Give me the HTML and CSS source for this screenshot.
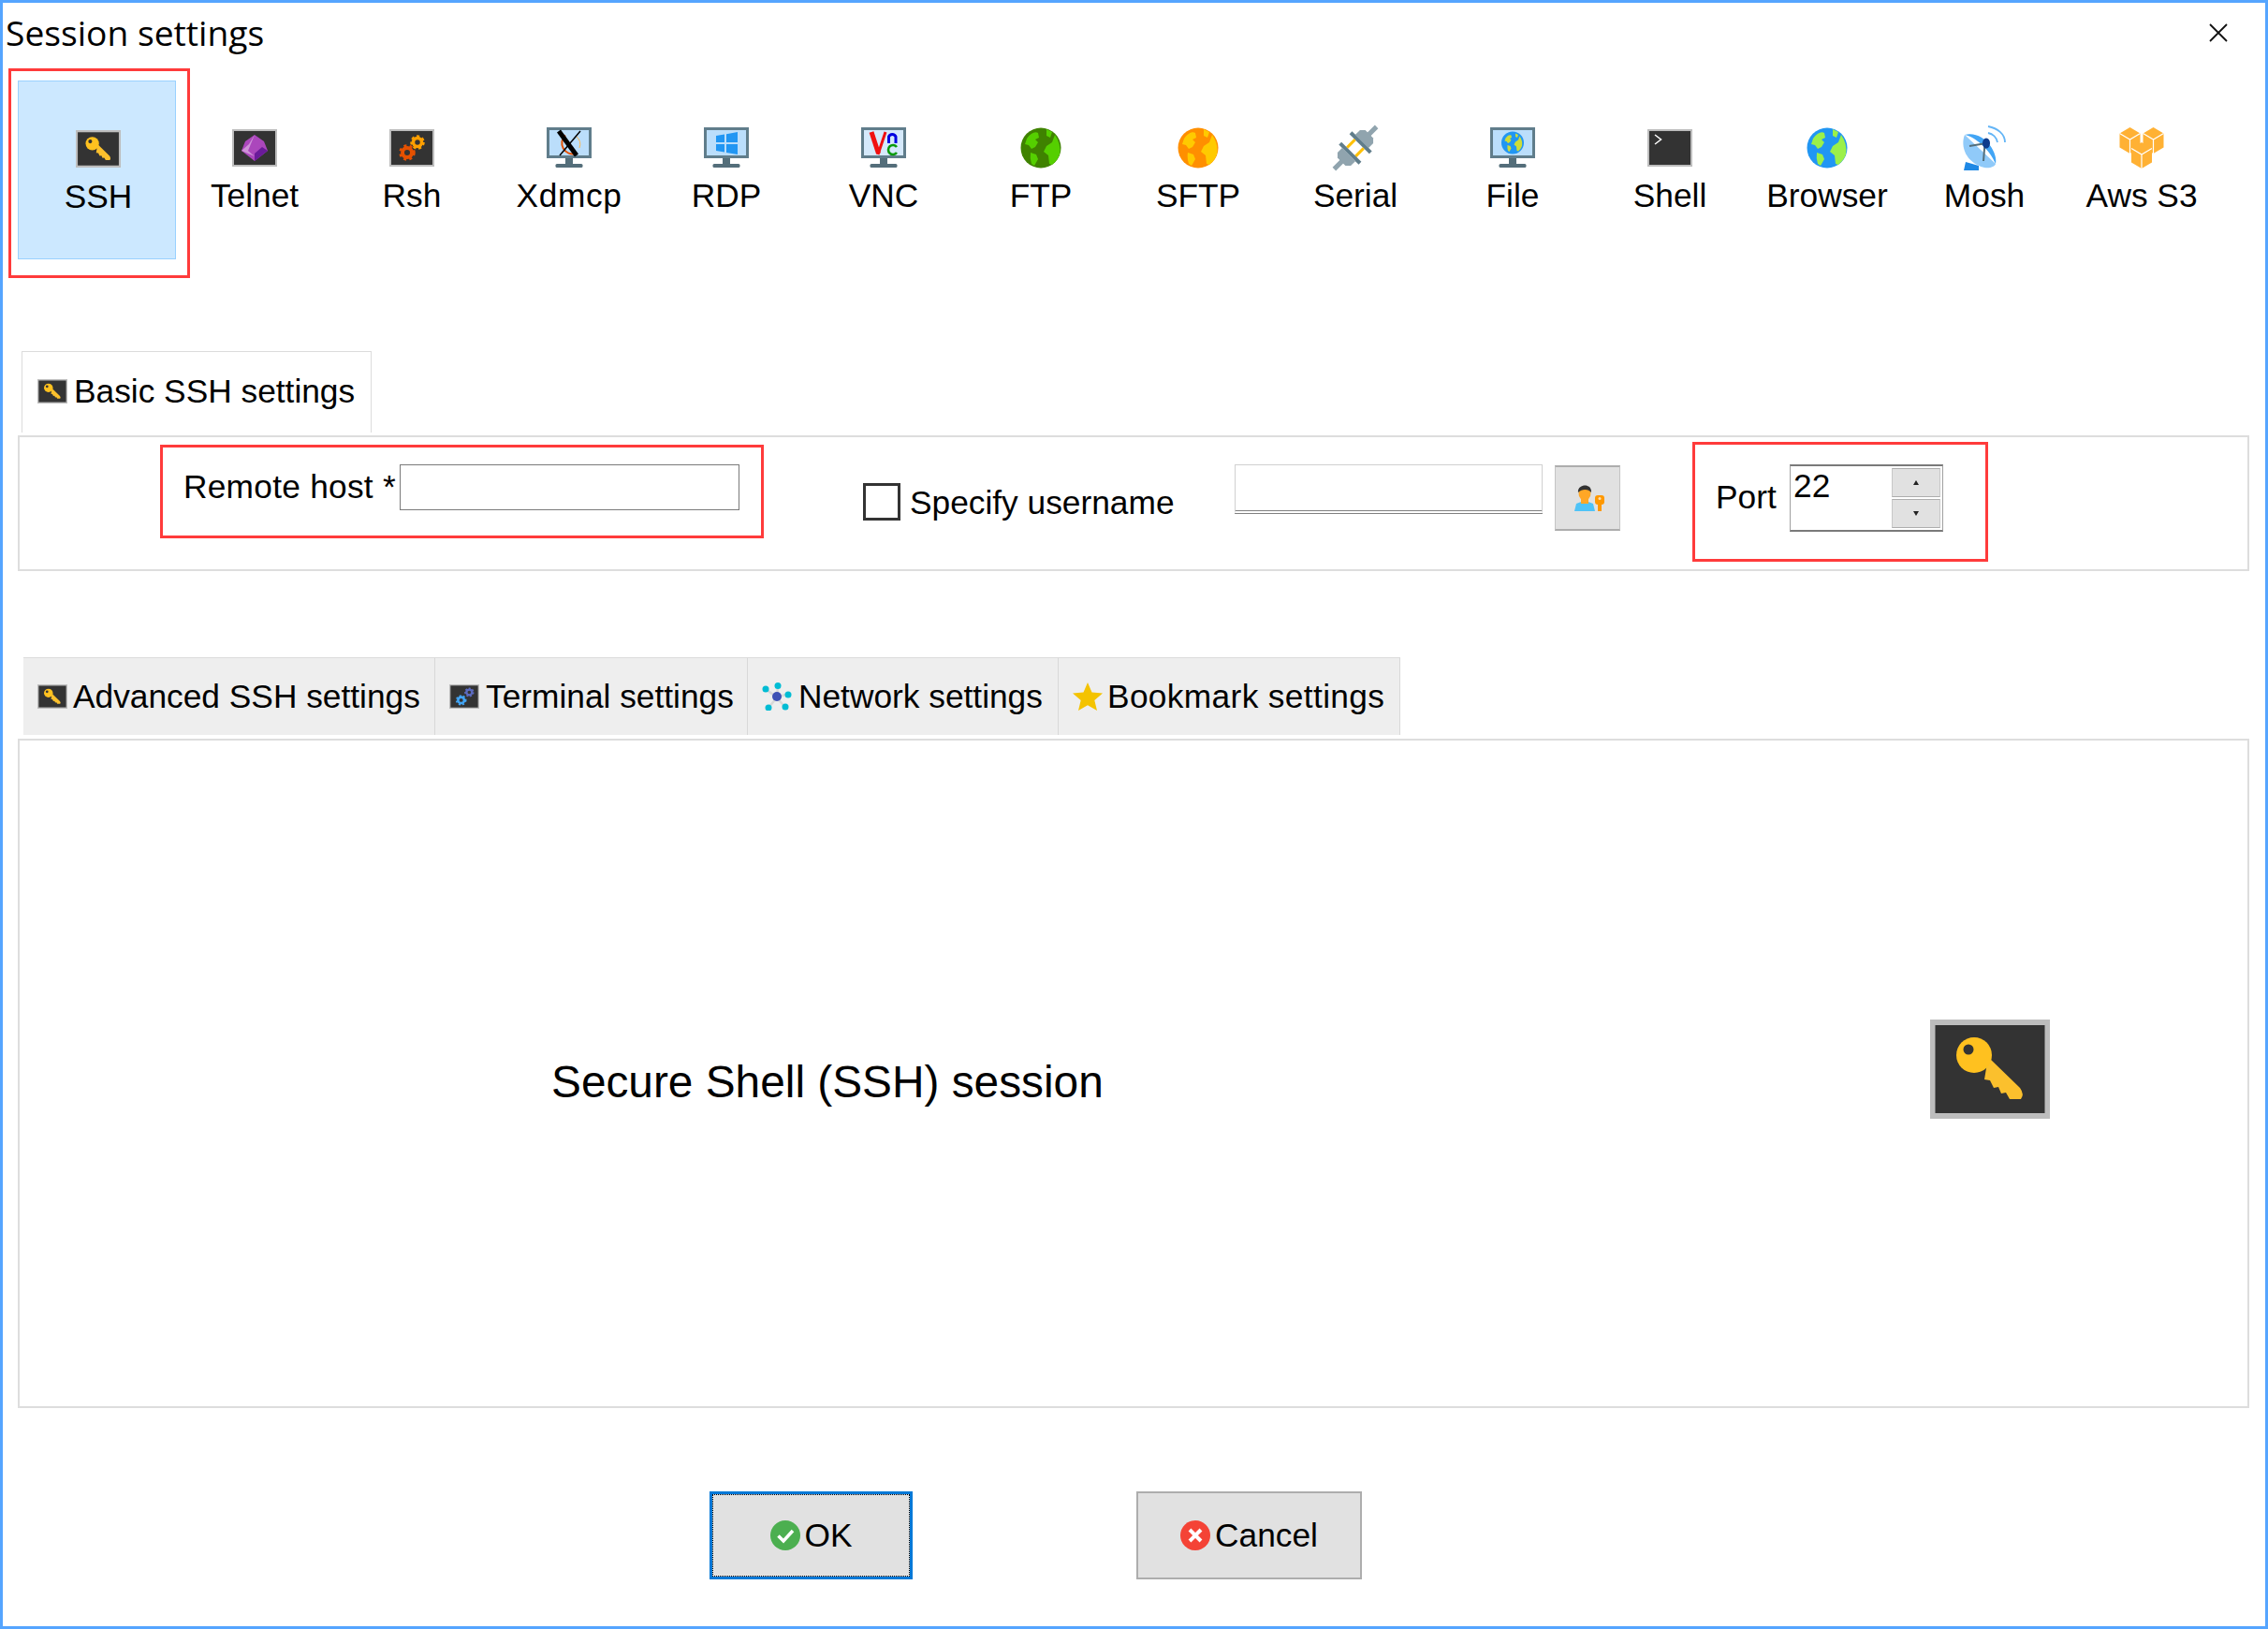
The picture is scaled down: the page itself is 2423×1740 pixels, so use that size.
FILE: index.html
```html
<!DOCTYPE html>
<html lang="en">
<head>
<meta charset="utf-8">
<title>Session settings</title>
<link rel="stylesheet" href="styles.css">
</head>
<body>
<svg class="defs" aria-hidden="true">
  <symbol id="key" viewBox="0 0 128 106" preserveAspectRatio="none">
    <rect width="128" height="106" fill="#bdbdbd"/>
    <rect x="5.5" y="6" width="117" height="94" fill="#333"/>
    <path d="M62 40L96 73Q101 80 97 85L85 85L81 78L76 79L73 72L68 73L64 65L58 64Z" fill="#fbc02d"/>
    <circle cx="47" cy="38" r="19" fill="#ffc11f"/>
    <circle cx="41" cy="32" r="5.5" fill="#333"/>
  </symbol>
  <symbol id="monitor" viewBox="0 0 48 48">
    <rect x="0" y="2" width="48" height="33" fill="#607d8b"/>
    <rect x="3" y="5" width="42" height="27" fill="#bbdefb"/>
    <rect x="20" y="35" width="8" height="6" fill="#546e7a"/>
    <rect x="9.500" y="41" width="29" height="4" rx="1.500" fill="#546e7a"/>
  </symbol>
  <symbol id="land" viewBox="0 0 48 48">
    <path d="M9 14C13 8 18 6 21 8L22 13L18 15L21 18L18 23L14 25L11 21L7 20ZM13 29L19 31L21 36L17 43L14 41Q12 35 13 29ZM30 4L36 7L34 13L30 11ZM39 10Q46 20 44 31Q42 37 36 42L33 41L32 32L27 28L30 22L36 18Z"/>
  </symbol>
  <symbol id="cube" viewBox="0 0 22 28">
    <path d="M11 0L22 6.500V21.500L11 28L0 21.500V6.500Z" fill="#ffb134"/>
    <path d="M0 6.500L11 13L22 6.500M11 13V28" fill="none" stroke="#fff" stroke-width="1.200"/>
  </symbol>
</svg>

<main class="window">
  <header class="titlebar">
    <h1 class="title">Session settings</h1>
    <svg class="close" viewBox="0 0 20 20"><path d="M1 1L19 19M19 1L1 19" fill="none" stroke="#111" stroke-width="1.800"/></svg>
  </header>

  <nav class="toolbar">
    <div class="tool tool-selected">
      <span class="annotation annotation-ssh"></span>
      <svg class="tool-icon" viewBox="0 0 48 48"><svg x="0" y="4" width="48" height="40" viewBox="0 0 128 106" preserveAspectRatio="none"><use href="#key"/></svg></svg>
      <span class="tool-label">SSH</span>
    </div>
    <div class="tool">
      <svg class="tool-icon" viewBox="0 0 48 48">
        <rect y="4" width="48" height="40" fill="#bdbdbd"/><rect x="2" y="6" width="44" height="36" fill="#333"/>
        <path d="M24 10L34 17L38 27L24 38L10 27L14 17Z" fill="#ab47bc"/>
        <path d="M24 10L18 20L10 27L24 33L17 27Z" fill="#ce93d8"/>
        <path d="M38 27L24 38V30L32 23Z" fill="#6a1b9a"/>
      </svg>
      <span class="tool-label">Telnet</span>
    </div>
    <div class="tool">
      <svg class="tool-icon" viewBox="0 0 48 48">
        <rect y="4" width="48" height="40" fill="#bdbdbd"/><rect x="2" y="6" width="44" height="36" fill="#333"/>
        <circle cx="19" cy="29" r="5" fill="none" stroke="#e65100" stroke-width="4"/>
        <circle cx="19" cy="29" r="7.500" fill="none" stroke="#e65100" stroke-width="2.500" stroke-dasharray="3 3.300"/>
        <circle cx="30" cy="18" r="4.500" fill="none" stroke="#ffa000" stroke-width="3.500"/>
        <circle cx="30" cy="18" r="6.500" fill="none" stroke="#ffa000" stroke-width="2.500" stroke-dasharray="3 2.800"/>
      </svg>
      <span class="tool-label">Rsh</span>
    </div>
    <div class="tool">
      <svg class="tool-icon" viewBox="0 0 48 48">
        <use href="#monitor"/>
        <path d="M20 10.500A11.500 11.500 0 0 0 31 30" fill="none" stroke="#e65100" stroke-width="2"/>
        <path d="M32 12A11 11 0 0 1 35 24" fill="none" stroke="#ffb74d" stroke-width="1"/>
        <path d="M13 6L32 32" fill="none" stroke="#000" stroke-width="5"/>
        <path d="M36 6L14 32" fill="none" stroke="#000" stroke-width="1.500"/>
      </svg>
      <span class="tool-label tool-label-wide">Xdmcp</span>
    </div>
    <div class="tool">
      <svg class="tool-icon" viewBox="0 0 48 48">
        <use href="#monitor"/>
        <path d="M13 11L22 9.500V18H13ZM24 9.200L36 7V18H24ZM13 20H22V28.500L13 27ZM24 20H36V31L24 29Z" fill="#2196f3"/>
      </svg>
      <span class="tool-label">RDP</span>
    </div>
    <div class="tool">
      <svg class="tool-icon" viewBox="0 0 48 48">
        <use href="#monitor"/>
        <rect x="3" y="5" width="42" height="27" fill="#d5e9fb"/>
        <path d="M11 7L18.500 30" fill="none" stroke="#f01010" stroke-width="5"/>
        <path d="M18 31L26 7" fill="none" stroke="#f01010" stroke-width="3"/>
        <path d="M29.500 19V12A4 4 0 0 1 37 12V19" fill="none" stroke="#0000e0" stroke-width="3"/>
        <path d="M38 23A5 5 0 1 0 38 29" fill="none" stroke="#0a9a0a" stroke-width="2.600"/>
      </svg>
      <span class="tool-label">VNC</span>
    </div>
    <div class="tool">
      <svg class="tool-icon globe-ftp" viewBox="0 0 48 48">
        <circle cx="24" cy="24" r="21.500" fill="#3f8200"/><use href="#land"/>
      </svg>
      <span class="tool-label">FTP</span>
    </div>
    <div class="tool">
      <svg class="tool-icon globe-sftp" viewBox="0 0 48 48">
        <circle cx="24" cy="24" r="21.500" fill="#ff8f00"/><use href="#land"/>
      </svg>
      <span class="tool-label">SFTP</span>
    </div>
    <div class="tool">
      <svg class="tool-icon" viewBox="0 0 48 48">
        <g transform="rotate(45 24 24)">
          <rect x="21.500" y="-8" width="5" height="12" fill="#90a4ae"/>
          <path d="M18 3H30L34 7V14H14V7Z" fill="#90a4ae"/>
          <rect x="9" y="14" width="30" height="4" fill="#607d8b"/>
          <rect x="16" y="18" width="3" height="12" fill="#ffc107"/>
          <rect x="29" y="18" width="3" height="12" fill="#ffc107"/>
          <rect x="9" y="30" width="30" height="4" fill="#607d8b"/>
          <path d="M14 34H34V41L30 45H18L14 41Z" fill="#90a4ae"/>
          <rect x="21.500" y="44" width="5" height="12" fill="#90a4ae"/>
        </g>
      </svg>
      <span class="tool-label">Serial</span>
    </div>
    <div class="tool">
      <svg class="tool-icon globe-file" viewBox="0 0 48 48">
        <use href="#monitor"/>
        <circle cx="24" cy="18.500" r="12" fill="#2196f3"/>
        <svg x="12" y="6.500" width="24" height="24" viewBox="0 0 48 48"><use href="#land"/></svg>
      </svg>
      <span class="tool-label">File</span>
    </div>
    <div class="tool">
      <svg class="tool-icon" viewBox="0 0 48 48">
        <rect y="4" width="48" height="40" fill="#bdbdbd"/><rect x="2" y="6" width="44" height="36" fill="#333"/>
        <path d="M8 10L14.500 15L8 20" fill="none" stroke="#fff" stroke-width="1.500"/>
      </svg>
      <span class="tool-label">Shell</span>
    </div>
    <div class="tool">
      <svg class="tool-icon globe-browser" viewBox="0 0 48 48">
        <circle cx="24" cy="24" r="21.500" fill="#2196f3"/><use href="#land"/>
      </svg>
      <span class="tool-label">Browser</span>
    </div>
    <div class="tool">
      <svg class="tool-icon" viewBox="0 0 48 48">
        <path d="M2 48L4 39L18 43V48Z" fill="#1e88e5"/>
        <path d="M3 10C-2 22 4 40 24 45C30 46 35 44 36 41Z" fill="#90caf9"/>
        <path d="M3 10C14 12 30 26 36 41C39 30 24 5 3 10Z" fill="#42a5f5"/>
        <path d="M8 22L26 19M24.500 19L23 38" fill="none" stroke="#546e7a" stroke-width="2"/>
        <ellipse cx="26" cy="19" rx="4" ry="5.500" fill="#0d3b8c"/>
        <path d="M28 8C33 9 37 13 38 18" fill="none" stroke="#64b5f6" stroke-width="1.800"/>
        <path d="M28 1C38 3 46 9 46 18" fill="none" stroke="#64b5f6" stroke-width="1.800"/>
      </svg>
      <span class="tool-label">Mosh</span>
    </div>
    <div class="tool">
      <svg class="tool-icon" viewBox="0 0 48 48">
        <use href="#cube" x="0" y="2" width="23" height="28"/>
        <use href="#cube" x="25" y="2" width="23" height="28"/>
        <use href="#cube" x="12.500" y="18" width="23" height="28"/>
      </svg>
      <span class="tool-label">Aws S3</span>
    </div>
  </nav>

  <section class="basic">
    <div class="tab tab-single">
      <svg class="tab-icon"><use href="#key"/></svg>
      <span>Basic SSH settings</span>
    </div>
    <div class="panel basic-panel">
      <div class="annotated host-box">
        <label class="host-label">Remote host *</label>
        <span class="field host-input"></span>
      </div>
      <div class="specify">
        <span class="checkbox"></span>
        <span class="specify-label">Specify username</span>
      </div>
      <span class="username-input"></span>
      <button class="user-button" type="button" aria-label="Users">
        <svg class="user-icon" viewBox="0 0 34 30">
          <path d="M1 30L3 22Q12 17 21 22L23 30Z" fill="#4fc3f7"/>
          <rect x="8" y="14" width="8" height="8" fill="#ffa726"/>
          <ellipse cx="12" cy="11" rx="6.500" ry="7.500" fill="#ffa726"/>
          <path d="M5 10C3.500 1 20 -1 19 10C16 6 9 6 5 10Z" fill="#333"/>
          <path d="M26 20H30V30H26Z" fill="#ff9800"/>
          <rect x="23" y="13" width="10" height="10" rx="3" fill="#ff9800"/>
          <circle cx="28" cy="16.500" r="1.500" fill="#ffe0b2"/>
        </svg>
      </button>
      <div class="annotated port-box">
        <label class="port-label">Port</label>
        <div class="spin">
          <span class="spin-value">22</span>
          <div class="spin-buttons">
            <span class="spin-button"><i class="arrow-up"></i></span>
            <span class="spin-button"><i class="arrow-down"></i></span>
          </div>
        </div>
      </div>
    </div>
  </section>

  <section class="advanced">
    <div class="tabs">
      <div class="tab tab-dim tab-adv">
        <svg class="tab-icon"><use href="#key"/></svg>
        <span>Advanced SSH settings</span>
      </div>
      <div class="tab tab-dim tab-term">
        <svg class="tab-icon" viewBox="0 0 48 40" preserveAspectRatio="none">
          <rect width="48" height="40" fill="#bdbdbd"/><rect x="2" y="2" width="44" height="36" fill="#333"/>
          <circle cx="19" cy="26" r="5" fill="none" stroke="#42a5f5" stroke-width="4"/>
          <circle cx="19" cy="26" r="7.500" fill="none" stroke="#42a5f5" stroke-width="2.500" stroke-dasharray="3 3.300"/>
          <circle cx="32" cy="13" r="4.500" fill="none" stroke="#5c6bc0" stroke-width="3.500"/>
          <circle cx="32" cy="13" r="6.500" fill="none" stroke="#5c6bc0" stroke-width="2.500" stroke-dasharray="3 2.800"/>
        </svg>
        <span>Terminal settings</span>
      </div>
      <div class="tab tab-dim tab-net">
        <svg class="tab-icon tab-icon-tall" viewBox="0 0 32 30">
          <path d="M16 16L4 7M16 16L17 4M16 16L28 12M16 16L7 27M16 16L25 27" stroke="#d8d8d8" stroke-width="2.500"/>
          <circle cx="16" cy="15" r="5" fill="#3f51b5"/>
          <circle cx="4" cy="7" r="3.500" fill="#00bcd4"/>
          <circle cx="17" cy="3.500" r="3.500" fill="#00bcd4"/>
          <circle cx="28" cy="13" r="3.500" fill="#00bcd4"/>
          <circle cx="7" cy="27" r="3.500" fill="#00bcd4"/>
          <circle cx="25" cy="26" r="3.500" fill="#00bcd4"/>
        </svg>
        <span>Network settings</span>
      </div>
      <div class="tab tab-dim tab-book">
        <svg class="tab-icon tab-icon-tall" viewBox="0 0 32 30">
          <path d="M16 0L20.500 10.500L32 11.500L23.300 19L26 30L16 24.300L6 30L8.700 19L0 11.500L11.500 10.500Z" fill="#f4c300"/>
        </svg>
        <span>Bookmark settings</span>
      </div>
    </div>
    <div class="panel info-panel">
      <p class="info-text">Secure Shell (SSH) session</p>
      <svg class="info-key"><use href="#key"/></svg>
    </div>
  </section>

  <footer class="actions">
    <button class="action action-ok" type="button">
      <svg class="action-icon" viewBox="0 0 32 32">
        <circle cx="16" cy="16" r="16" fill="#4caf50"/>
        <path d="M8.500 16.500L14 22L24 11" fill="none" stroke="#fff" stroke-width="3.500"/>
      </svg>
      <span>OK</span>
    </button>
    <button class="action action-cancel" type="button">
      <svg class="action-icon" viewBox="0 0 32 32">
        <circle cx="16" cy="16" r="16" fill="#f44336"/>
        <path d="M10 10L22 22M22 10L10 22" fill="none" stroke="#fff" stroke-width="4"/>
      </svg>
      <span>Cancel</span>
    </button>
  </footer>
</main>
</body>
</html>
```

FILE: styles.css
```css
* {
  box-sizing: border-box;
}

html,
body {
  margin: 0;
  padding: 0;
  background: #fff;
}

body {
  font-family: "Liberation Sans", Arial, sans-serif;
  font-size: 35.3px;
  line-height: 40px;
  color: #000;
}

.defs {
  display: none;
}

.window {
  width: 2423px;
  height: 1740px;
  border: 3px solid #55a5ff;
  background: #fff;
  overflow: hidden;
}

.titlebar {
  display: flex;
  justify-content: space-between;
  align-items: flex-start;
  height: 83px;
}

.title {
  margin: 7px 0 0 3px;
  font-family: "Open Sans", sans-serif;
  font-size: 37.2px;
  line-height: 50px;
  font-weight: 400;
}

.close {
  width: 20px;
  height: 20px;
  margin: 22px 40px 0 0;
}

.toolbar {
  display: grid;
  grid-template-columns: repeat(14, 168px);
  height: 191px;
  padding-left: 17px;
}

.tool {
  position: relative;
  display: flex;
  flex-direction: column;
  align-items: center;
  padding-top: 47px;
  border: 1px solid transparent;
}

.tool-selected {
  margin-left: -1px;
  padding-left: 3px;
  background: #cce8ff;
  border-color: #99d1ff;
}

.tool-icon {
  display: block;
  flex: none;
  width: 48px;
  height: 48px;
  overflow: visible;
}

.tool-selected .tool-icon {
  margin-top: 1px;
}

.tool-label {
  margin-top: 7px;
  white-space: nowrap;
}

.tool-label-wide {
  letter-spacing: 0.6px;
}

.annotation {
  position: absolute;
  top: -14px;
  left: -11px;
  right: -16px;
  bottom: -21px;
  border: 3px solid #ff3b3b;
}

.globe-ftp { fill: #55cf00; }
.globe-sftp { fill: #ffca00; }
.globe-browser { fill: #9bf04a; }
.globe-file { fill: #cddc39; }

.basic {
  margin-top: 98px;
}

.tab {
  display: flex;
  align-items: center;
  gap: 7px;
  white-space: nowrap;
}

.tab-single {
  width: 374px;
  height: 87px;
  margin-left: 20px;
  padding: 0 16px 3px;
  border: 1px solid #dcdcdc;
  border-bottom: 0;
}

.tab-icon {
  display: block;
  flex: none;
  width: 32px;
  height: 26px;
}

.tab-icon-tall {
  height: 30px;
}

.panel {
  display: flex;
  align-items: flex-start;
  width: 2384px;
  margin-left: 16px;
  border: 2px solid #dddddd;
}

.basic-panel {
  height: 145px;
  margin-top: 3px;
}

.annotated {
  display: flex;
  align-items: flex-start;
  flex: none;
  border: 3px solid #ff3b3b;
}

.host-box {
  width: 645px;
  height: 100px;
  margin: 8px 0 0 150px;
  padding-left: 22px;
}

.host-label {
  flex: none;
  width: 231px;
  margin-top: 22px;
  letter-spacing: 0.25px;
}

.host-input {
  display: block;
  width: 363px;
  height: 49px;
  margin-top: 18px;
  border: 1.500px solid #7a7a7a;
}

.specify {
  display: flex;
  align-items: flex-start;
  gap: 10px;
  flex: none;
  width: 397px;
  margin: 49px 0 0 106px;
}

.specify-label {
  margin-top: 1px;
}

.checkbox {
  flex: none;
  width: 40px;
  height: 40px;
  border: 3px solid #333;
}

.username-input {
  flex: none;
  width: 329px;
  height: 53px;
  margin-top: 29px;
  border: 1px solid #d0d0d0;
  border-bottom: 4px double #808080;
}

.user-button {
  display: flex;
  justify-content: center;
  align-items: flex-end;
  flex: none;
  width: 70px;
  height: 70px;
  margin: 30px 0 0 13px;
  padding: 0 0 19px;
  background: #e1e1e1;
  border: 0;
  border-top: 2px solid #adadad;
  border-bottom: 2px solid #adadad;
  border-left: 1px solid #c4c4c4;
  border-right: 1px solid #c4c4c4;
}

.user-icon {
  display: block;
  width: 34px;
  height: 30px;
  margin-left: 4px;
}

.port-box {
  width: 316px;
  height: 128px;
  margin: 5px 0 0 77px;
  padding-left: 22px;
}

.port-label {
  flex: none;
  width: 79px;
  margin-top: 36px;
}

.spin {
  display: flex;
  justify-content: space-between;
  flex: none;
  width: 164px;
  height: 72px;
  margin-top: 21px;
  padding: 2px 2px 2px 3px;
  border: 1px solid #a0a0a0;
  border-top: 2px solid #7a7a7a;
  border-bottom: 2px solid #7a7a7a;
}

.spin-value {
  display: block;
  margin-top: -1px;
}

.spin-buttons {
  display: flex;
  flex-direction: column;
  gap: 2px;
  width: 52px;
}

.spin-button {
  display: flex;
  justify-content: center;
  align-items: center;
  height: 32px;
  background: #e1e1e1;
  border-top: 1px solid #adadad;
  border-bottom: 1px solid #adadad;
  border-left: 1px solid #c8c8c8;
  border-right: 1px solid #c8c8c8;
}

.arrow-up,
.arrow-down {
  width: 0;
  height: 0;
  border-left: 3px solid transparent;
  border-right: 3px solid transparent;
}

.arrow-up {
  border-bottom: 5px solid #222;
}

.arrow-down {
  border-top: 5px solid #222;
}

.advanced {
  margin-top: 92px;
}

.tabs {
  display: flex;
  height: 83px;
  margin-left: 22px;
}

.tab-dim {
  padding-left: 15px;
  background: #eeeeee;
  border-top: 1px solid #dcdcdc;
  border-right: 1px solid #d8d8d8;
}

.tab-adv {
  width: 440px;
  gap: 6px;
}

.tab-term {
  width: 334px;
}

.tab-net {
  width: 332px;
  gap: 7px;
}

.tab-book {
  width: 365px;
  gap: 5px;
  letter-spacing: 0.35px;
}

.info-panel {
  height: 715px;
  margin-top: 4px;
}

.info-text {
  margin: 337px 0 0 568px;
  font-size: 47.8px;
  line-height: 56px;
  white-space: nowrap;
}

.info-key {
  display: block;
  flex: none;
  width: 128px;
  height: 106px;
  margin: 298px 211px 0 auto;
}

.actions {
  display: flex;
  gap: 239px;
  margin-top: 89px;
  padding-left: 755px;
}

.action {
  display: flex;
  justify-content: center;
  align-items: center;
  gap: 5px;
  height: 94px;
  padding: 0;
  background: #e1e1e1;
  font: inherit;
  color: #000;
}

.action-ok {
  width: 217px;
  border: 3px solid #0078d7;
  outline: 1px dotted #000;
  outline-offset: -4px;
}

.action-cancel {
  width: 241px;
  border: 2px solid #adadad;
}

.action-icon {
  display: block;
  flex: none;
  width: 32px;
  height: 32px;
}
```
